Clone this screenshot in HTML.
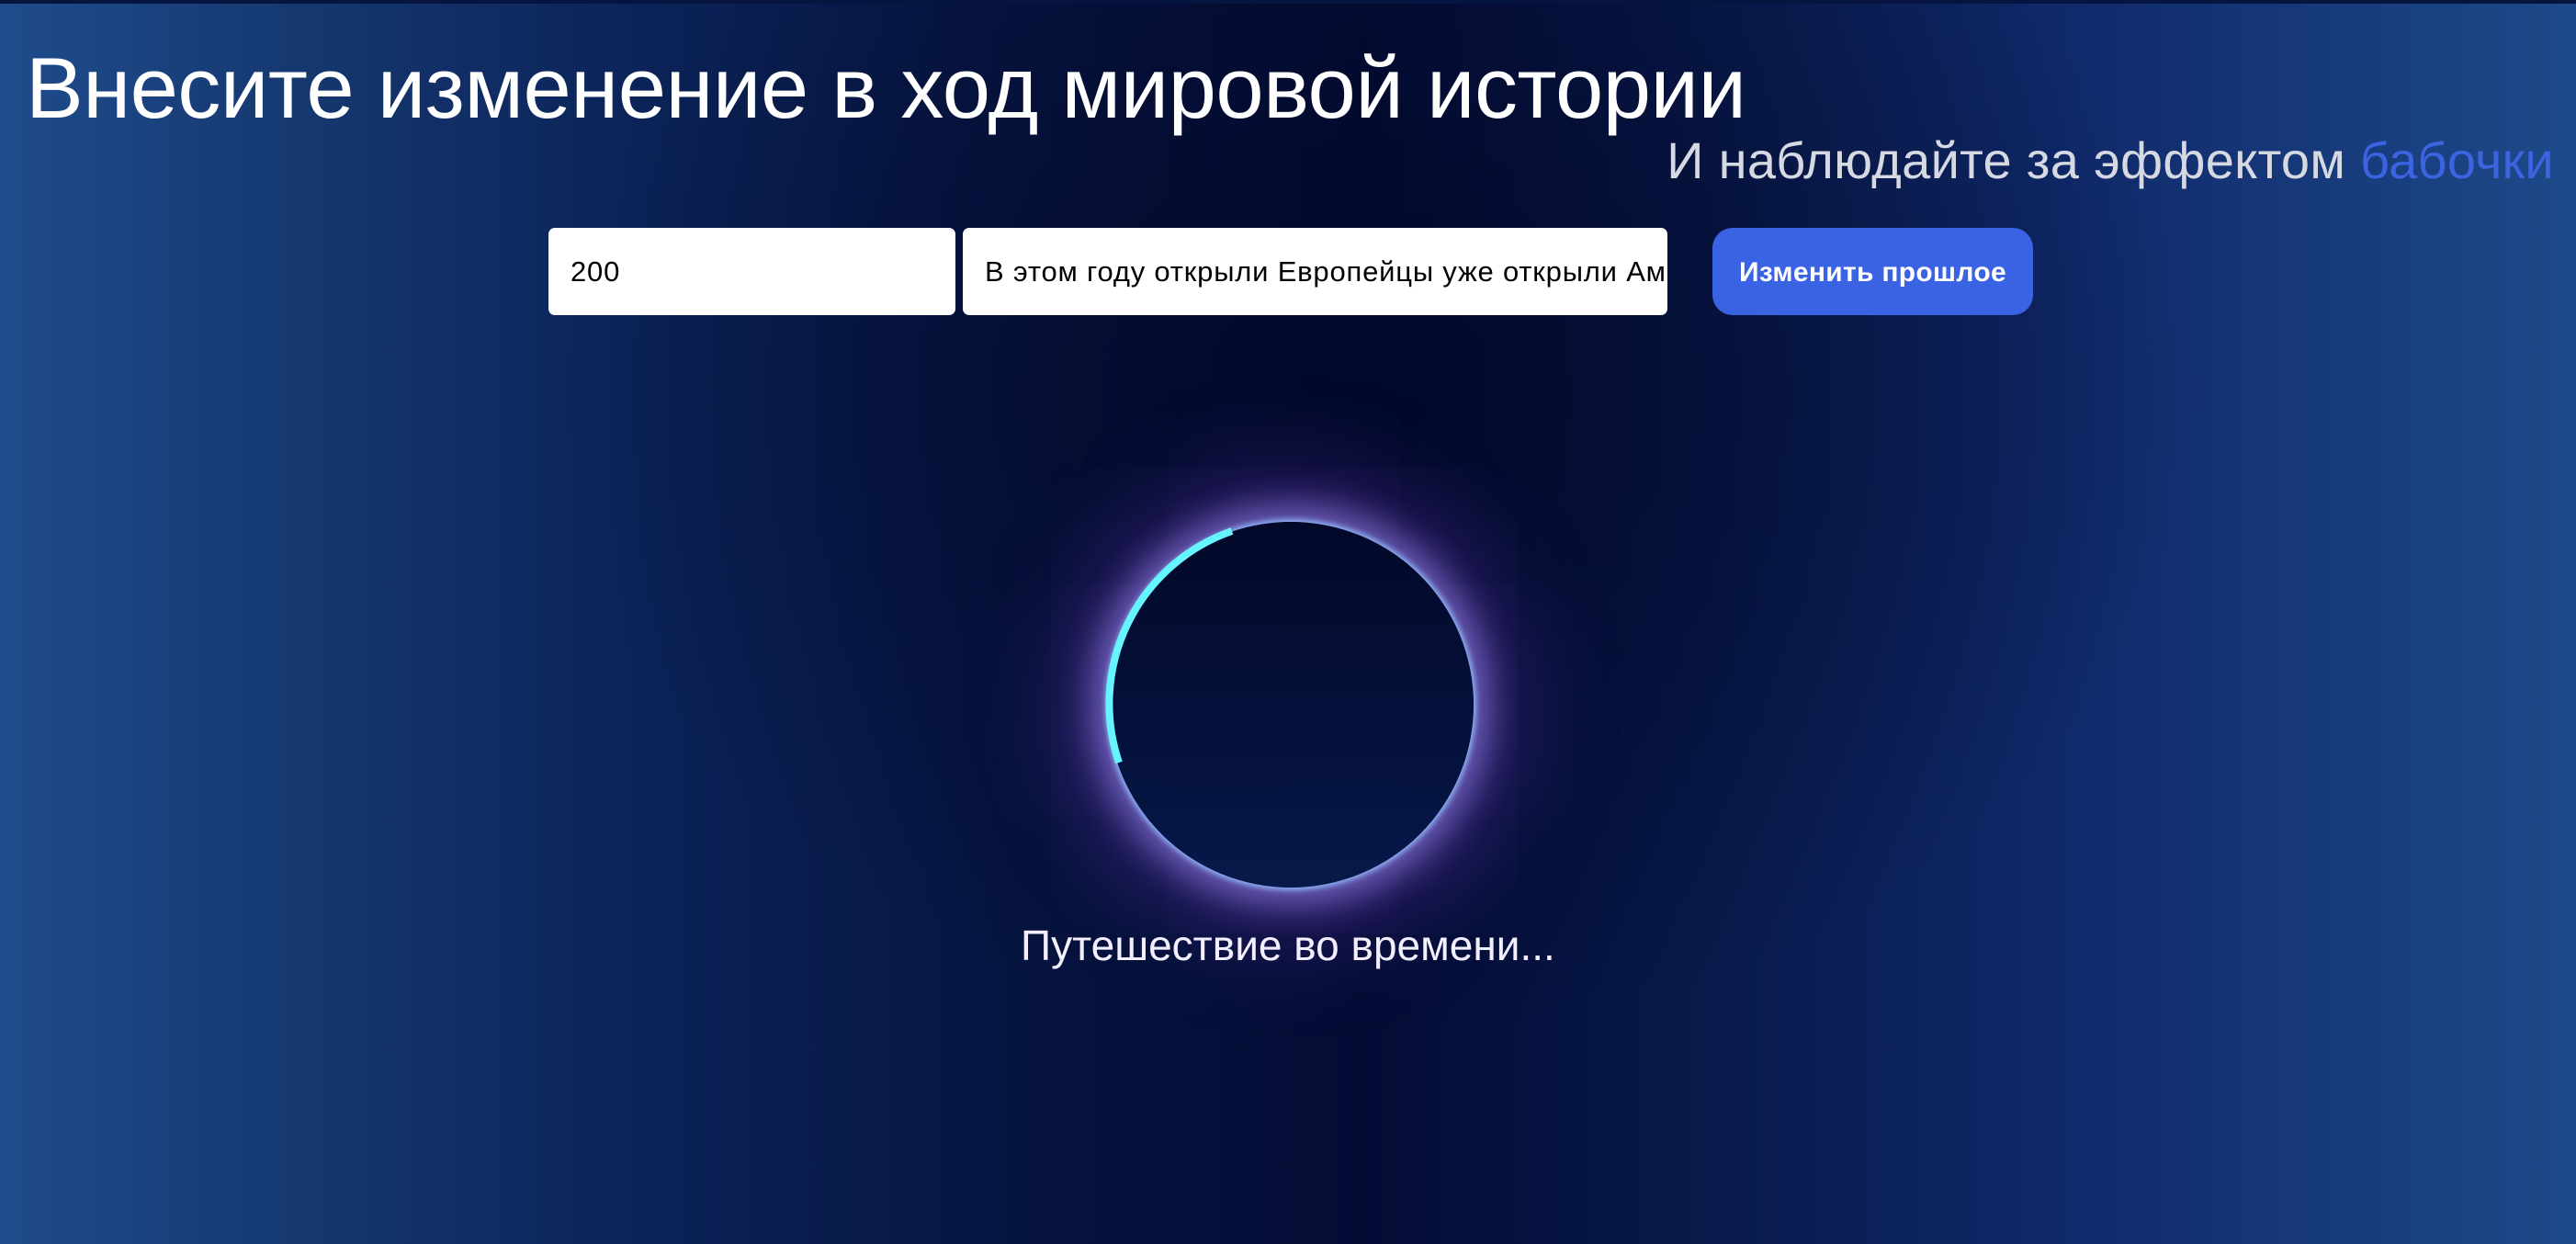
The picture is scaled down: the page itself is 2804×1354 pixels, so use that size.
<!DOCTYPE html>
<html><head><meta charset="utf-8"><style>
html,body{margin:0;padding:0;}
body{width:2804px;height:1354px;overflow:hidden;position:relative;
font-family:"Liberation Sans",sans-serif;
background:radial-gradient(ellipse 900px 700px at 1500px 430px,rgba(2,8,40,0.8) 0%,rgba(2,8,40,0) 100%),
linear-gradient(90deg,#1f4c8c 0%,#15376f 12%,#0b2358 25%,#06143f 40%,#030c35 53%,#08194a 66%,#10296a 80%,#1d4a8a 100%);}
.top{position:absolute;left:0;top:0;width:2804px;height:4px;background:#061440;}
h1{position:absolute;left:28px;top:42px;margin:0;font-weight:400;font-size:94px;color:#fff;white-space:nowrap;letter-spacing:-0.5px;}
.sub{position:absolute;right:24px;top:142px;margin:0;font-size:56px;color:#d6d9e2;white-space:nowrap;letter-spacing:0.3px;}
.sub span{color:#3c63e0;}
.in{position:absolute;top:248px;height:95px;background:#fff;border-radius:7px;box-sizing:border-box;padding-left:24px;line-height:95px;font-size:31px;color:#000;white-space:nowrap;overflow:hidden;letter-spacing:0.8px;}
.btn{position:absolute;left:1864px;top:248px;width:349px;height:95px;background:#3a63e3;border-radius:22px;color:#fff;font-weight:700;font-size:30px;line-height:97px;text-align:center;letter-spacing:0.3px;}
.ring{position:absolute;left:1206px;top:568px;width:398px;height:398px;border-radius:50%;
background:linear-gradient(#020828,#07184a);
box-shadow:0 0 6px 3px #8ab0f0,0 0 35px 18px rgba(150,130,235,0.65),0 0 100px 55px rgba(110,60,190,0.4);}
svg{position:absolute;left:1186px;top:548px;}
.load{position:absolute;left:1111px;top:1002px;font-size:46px;color:#f3efff;white-space:nowrap;}
</style></head><body>
<div class="top"></div>
<h1>Внесите изменение в ход мировой истории</h1>
<div class="sub">И наблюдайте за эффектом <span>бабочки</span></div>
<div class="in" style="left:597px;width:443px;">200</div>
<div class="in" style="left:1048px;width:767px;">В этом году открыли Европейцы уже открыли Америку</div>
<div class="btn">Изменить прошлое</div>
<div class="ring"></div>
<svg width="438" height="438" viewBox="0 0 438 438">
<path d="M 32 282 A 199 199 0 0 1 155 30" fill="none" stroke="#66f4ff" stroke-width="8"/>
</svg>
<div class="load">Путешествие во времени...</div>
</body></html>
